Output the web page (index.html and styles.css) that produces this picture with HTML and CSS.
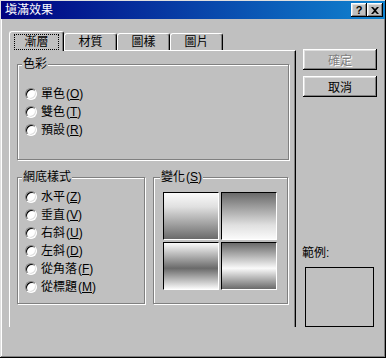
FILE: index.html
```html
<!DOCTYPE html>
<html lang="zh-Hant">
<head>
    <meta charset="UTF-8">
    <title>塡滿效果</title>
    <link rel="stylesheet" href="styles.css">
</head>
<body>

<div class="window">
    <div class="titlebar">
        <span class="title">塡滿效果</span>
        <div class="caption-btns">
            <span class="cap-btn help">?</span>
            <span class="cap-btn close">
                <svg width="8" height="7" viewBox="0 0 8 7"><path d="M0 0h2l2 2 2-2h2L5 3.5 8 7H6L4 5 2 7H0l3-3.5z" fill="#000"/></svg>
            </span>
        </div>
    </div>

    <div class="main">
        <div class="left">
            <div class="tabs">
                <div class="tab active"><span class="focus">漸層</span></div>
                <div class="tab">材質</div>
                <div class="tab">圖樣</div>
                <div class="tab">圖片</div>
            </div>

            <div class="panel">
                <fieldset class="group colors">
                    <legend>色彩</legend>
                    <div class="radio-row"><span class="radio"></span>單色<span class="key">(<u>O</u>)</span></div>
                    <div class="radio-row"><span class="radio"></span>雙色<span class="key">(<u>T</u>)</span></div>
                    <div class="radio-row"><span class="radio"></span>預設<span class="key">(<u>R</u>)</span></div>
                </fieldset>

                <div class="row">
                    <fieldset class="group styles">
                        <legend>網底樣式</legend>
                        <div class="radio-row"><span class="radio"></span>水平<span class="key">(<u>Z</u>)</span></div>
                        <div class="radio-row"><span class="radio"></span>垂直<span class="key">(<u>V</u>)</span></div>
                        <div class="radio-row"><span class="radio"></span>右斜<span class="key">(<u>U</u>)</span></div>
                        <div class="radio-row"><span class="radio"></span>左斜<span class="key">(<u>D</u>)</span></div>
                        <div class="radio-row"><span class="radio"></span>從角落<span class="key">(<u>F</u>)</span></div>
                        <div class="radio-row"><span class="radio"></span>從標題<span class="key">(<u>M</u>)</span></div>
                    </fieldset>

                    <fieldset class="group variants">
                        <legend>變化<span class="key">(<u>S</u>)</span></legend>
                        <div class="swatches">
                            <div class="swatch s1"></div>
                            <div class="swatch s2"></div>
                            <div class="swatch s3"></div>
                            <div class="swatch s4"></div>
                        </div>
                    </fieldset>
                </div>
            </div>
        </div>

        <div class="side">
            <button class="btn" disabled>確定</button>
            <button class="btn">取消</button>
            <div class="sample">
                <div class="sample-label">範例:</div>
                <div class="sample-box"></div>
            </div>
        </div>
    </div>
</div>

</body>
</html>
```

FILE: styles.css
```css
body {
    margin: 0;
    background-color: #c0c0c0;
    font-family: "Liberation Sans", "Noto Sans CJK TC", "Noto Sans CJK SC", sans-serif;
    font-size: 12px;
    line-height: 14px;
    color: #000;
    text-autospace: no-autospace;
}
.window {
    width: 386px;
    height: 358px;
    box-sizing: border-box;
    padding: 1px;
    background-color: #c0c0c0;
    box-shadow: inset -1px -1px #000, inset 1px 1px #dfdfdf, inset -2px -2px #808080, inset 2px 2px #fff;
    display: flex;
    flex-direction: column;
}
.titlebar {
    height: 18px;
    display: flex;
    align-items: center;
    justify-content: space-between;
    padding: 0 2px 0 4px;
    background: linear-gradient(90deg, #000080, #1084d0);
    color: #fff;
}
.caption-btns {
    display: flex;
}
.cap-btn {
    width: 16px;
    height: 14px;
    box-sizing: border-box;
    display: flex;
    align-items: center;
    justify-content: center;
    background-color: #c0c0c0;
    color: #000;
    box-shadow: inset -1px -1px #000, inset 1px 1px #fff, inset -2px -2px #808080, inset 2px 2px #dfdfdf;
}
.help {
    font-weight: bold;
    font-size: 11px;
}
.main {
    display: flex;
    gap: 7px;
    padding: 12px 0 0 8px;
}
.left {
    width: 287px;
}
.tabs {
    display: flex;
    align-items: flex-end;
    height: 19px;
}
.tab {
    width: 53px;
    height: 17px;
    box-sizing: border-box;
    display: flex;
    align-items: center;
    justify-content: center;
    border-top: 1px solid #fff;
    border-left: 1px solid #fff;
    border-right: 1px solid #000;
    border-radius: 3px 3px 0 0;
    box-shadow: inset -1px 0 #808080;
    background-color: #c0c0c0;
}
.tab.active {
    width: 55px;
    height: 20px;
    margin-bottom: -1px;
    position: relative;
    z-index: 1;
}
.focus {
    outline: 1px dotted #000;
    padding: 0 9px;
}
.panel {
    height: 277px;
    box-sizing: border-box;
    border-top: 1px solid #fff;
    border-left: 1px solid #fff;
    border-right: 1px solid #000;
    box-shadow: inset -1px 0 #808080;
    padding: 6px 0 0 7px;
}
.group {
    margin: 0;
    box-sizing: border-box;
    border: 1px solid #808080;
    box-shadow: inset 1px 1px #fff, 1px 1px #fff;
    min-width: 0;
}
.group legend {
    padding: 0 1px;
    margin-left: -3px;
    background-color: #c0c0c0;
}
.key {
    font-family: "Liberation Sans", sans-serif;
    margin-left: 1px;
}
.key u {
    text-underline-offset: 1px;
}
.colors {
    width: 272px;
    height: 103px;
    padding: 14px 7px 0 7px;
}
.row {
    display: flex;
    margin-top: 10px;
}
.styles {
    width: 128px;
    height: 134px;
    padding: 4px 7px 0 7px;
}
.variants {
    width: 135px;
    height: 134px;
    margin-left: 8px;
    padding: 8px 0 0 9px;
}
.radio-row {
    display: flex;
    align-items: center;
    height: 18px;
}
.radio {
    width: 12px;
    height: 12px;
    margin-right: 4px;
    box-sizing: border-box;
    border-radius: 50%;
    background-color: #fff;
    border: 1px solid;
    border-color: #808080 #fff #fff #808080;
    box-shadow: inset 1px 1px #000, inset -1px -1px #dfdfdf;
}
.swatches {
    display: grid;
    grid-template-columns: 56px 56px;
    grid-auto-rows: 48px;
    gap: 2px;
}
.swatch {
    box-sizing: border-box;
    border: 1px solid;
    border-color: #000 #fff #fff #000;
}
.s1 {
    background: linear-gradient(#fafafa, #e0e0e0 30%, #6a6a6a);
}
.s2 {
    background: linear-gradient(#6a6a6a, #e0e0e0 70%, #fafafa);
}
.s3 {
    background: linear-gradient(#fafafa, #6a6a6a 55%, #fafafa);
}
.s4 {
    background: linear-gradient(#6a6a6a, #fafafa 55%, #6a6a6a);
}
.side {
    width: 74px;
    display: flex;
    flex-direction: column;
    padding-top: 18px;
}
.btn {
    width: 74px;
    height: 21px;
    margin-bottom: 6px;
    padding: 0;
    border: none;
    background-color: #c0c0c0;
    font-family: inherit;
    font-size: 12px;
    color: #000;
    box-shadow: inset -1px -1px #000, inset 1px 1px #fff, inset -2px -2px #808080, inset 2px 2px #dfdfdf;
}
.btn:disabled {
    color: #808080;
    text-shadow: 1px 1px #fff;
}
.sample {
    margin-top: auto;
}
.sample-label {
    margin-left: -1px;
}
.sample-box {
    width: 69px;
    height: 60px;
    box-sizing: border-box;
    margin: 7px 0 0 2px;
    border: 1px solid #000;
}
```
